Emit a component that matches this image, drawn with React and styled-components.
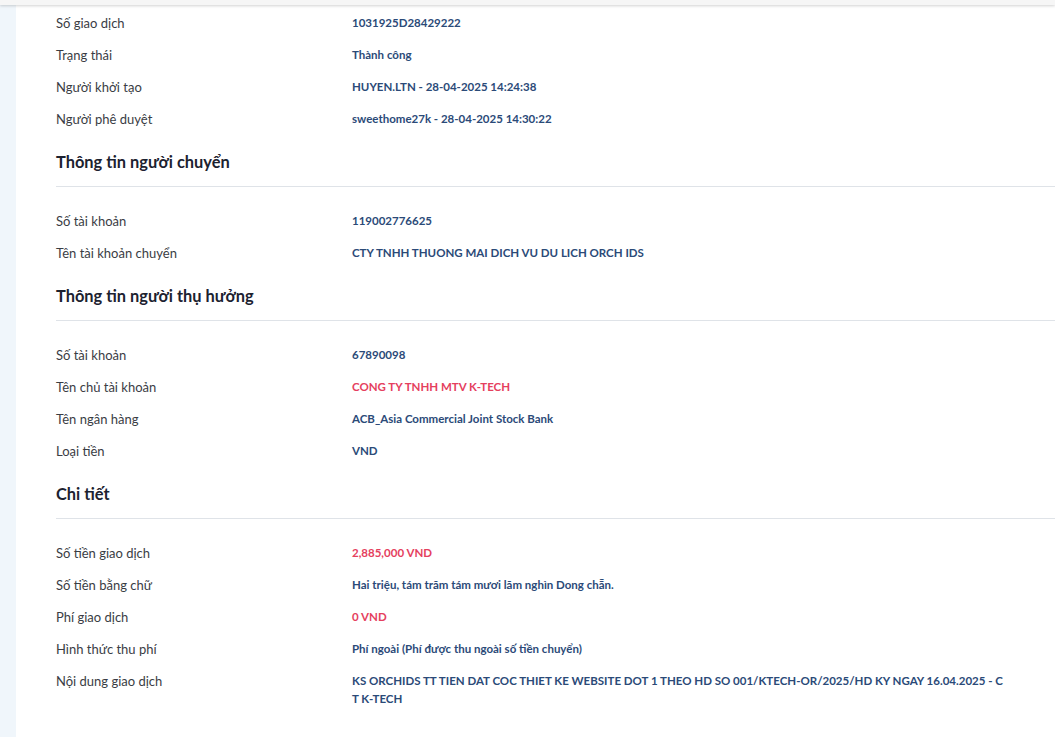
import React from "react";
import styled, { createGlobalStyle } from "styled-components";

const GlobalStyle = createGlobalStyle`
  body {
    margin: 0;
    background: #fff;
    font-family: "Lato", "Noto Sans", sans-serif;
  }
`;

const TopShadow = styled.div`
  height: 5px;
  background: #f6f6f6;
  box-shadow: 0 1px 3px rgba(0, 0, 0, 0.18);
  position: relative;
  z-index: 1;
`;

const Page = styled.div`
  display: flex;
  min-height: 732px;
`;

const SideStrip = styled.div`
  width: 16px;
  flex-shrink: 0;
  background: #f0f6fb;
`;

const Main = styled.div`
  flex: 1;
  min-width: 0;
  padding: 2px 0 20px 40px;
`;

const Section = styled.div`
  padding-bottom: 1px;
`;

const Heading = styled.h2`
  margin: 0 0 18px;
  padding: 16px 0 14px;
  font-size: 16.4px;
  line-height: 20px;
  font-weight: 700;
  color: #1c2230;
  border-bottom: 1px solid #dfe3e8;
`;

const Row = styled.div`
  display: grid;
  grid-template-columns: 296px minmax(0, 1fr);
  padding: 7px 0;
  line-height: 18px;
`;

const Label = styled.div`
  font-size: 13px;
  color: #3a3d44;
`;

const Value = styled.div`
  font-size: 11.5px;
  color: ${p => (p.$red ? "#e5405e" : "#2b4a78")};
  font-weight: 700;
  padding-right: 47px;
  word-break: break-all;
`;

const sections = [
  {
    rows: [
      ["Số giao dịch", "1031925D28429222"],
      ["Trạng thái", "Thành công"],
      ["Người khởi tạo", "HUYEN.LTN - 28-04-2025 14:24:38"],
      ["Người phê duyệt", "sweethome27k - 28-04-2025 14:30:22"]
    ]
  },
  {
    title: "Thông tin người chuyển",
    rows: [
      ["Số tài khoản", "119002776625"],
      ["Tên tài khoản chuyển", "CTY TNHH THUONG MAI DICH VU DU LICH ORCH IDS"]
    ]
  },
  {
    title: "Thông tin người thụ hưởng",
    rows: [
      ["Số tài khoản", "67890098"],
      ["Tên chủ tài khoản", "CONG TY TNHH MTV K-TECH", true],
      ["Tên ngân hàng", "ACB_Asia Commercial Joint Stock Bank"],
      ["Loại tiền", "VND"]
    ]
  },
  {
    title: "Chi tiết",
    rows: [
      ["Số tiền giao dịch", "2,885,000 VND", true],
      ["Số tiền bằng chữ", "Hai triệu, tám trăm tám mươi lăm nghìn Dong chẵn."],
      ["Phí giao dịch", "0 VND", true],
      ["Hình thức thu phí", "Phí ngoài (Phí được thu ngoài số tiền chuyển)"],
      [
        "Nội dung giao dịch",
        "KS ORCHIDS TT TIEN DAT COC THIET KE WEBSITE DOT 1 THEO HD SO 001/KTECH-OR/2025/HD KY NGAY 16.04.2025 - CT K-TECH"
      ]
    ]
  }
];

export default function App() {
  return (
    <>
      <GlobalStyle />
      <TopShadow />
      <Page>
        <SideStrip />
        <Main>
          {sections.map((s, i) => (
            <Section key={i}>
              {s.title && <Heading>{s.title}</Heading>}
              {s.rows.map(([label, value, red]) => (
                <Row key={label + value}>
                  <Label>{label}</Label>
                  <Value $red={red}>{value}</Value>
                </Row>
              ))}
            </Section>
          ))}
        </Main>
      </Page>
    </>
  );
}
